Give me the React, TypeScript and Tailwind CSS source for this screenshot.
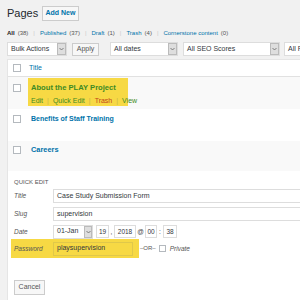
import React from "react";

const Chevron = () => (
  <svg width="5" height="4" viewBox="0 0 5 4" className="block">
    <path d="M0.5 1 L2.5 3 L4.5 1" fill="none" stroke="#666" strokeWidth="0.8" />
  </svg>
);

function Select({ label, w, arrowW = 9 }: { label: string; w: number; arrowW?: number }) {
  return (
    <div
      className="flex h-[14px] items-stretch border border-[#dddddd] bg-white shrink-0"
      style={{ width: w }}
    >
      <div className="flex flex-1 items-center pl-[3px] text-[7px] text-[#32373c] whitespace-nowrap overflow-hidden">
        {label}
      </div>
      <div
        className="flex items-center justify-center border border-[#bbbbbb] bg-[#dedede]"
        style={{ width: arrowW }}
      >
        <Chevron />
      </div>
    </div>
  );
}

const Box = () => (
  <div className="h-[8px] w-[8px] border border-[#b4b9be] bg-white shrink-0" />
);

const Sep = () => <span className="mx-[5px] text-[#c9c9c9]">|</span>;
const ASep = () => <span className="mx-[4px] text-[#c8b54a]">|</span>;

export default function App() {
  return (
    <div className="w-[300px] h-[300px] overflow-hidden bg-[#f1f1f1] text-[#444] font-['Liberation_Sans',Arial,sans-serif]">
      {/* header */}
      <div className="flex items-center h-[15px] mt-[6px] pl-[7px]">
        <div className="text-[11px] text-[#23282d] leading-none w-[35px]">Pages</div>
        <div className="flex h-[15px] w-[37px] items-center justify-center border border-[#cccccc] bg-[#f7f7f7] text-[7px] font-bold text-[#0073aa]">
          Add New
        </div>
      </div>
      {/* subsubsub */}
      <div className="flex items-center h-[9px] mt-[8px] pl-[7px] text-[6px] whitespace-nowrap text-[#555]">
        <span className="font-bold text-[#222]">All</span>
        <span className="ml-[3px]">(38)</span>
        <Sep />
        <span className="text-[#0073aa]">Published</span>
        <span className="ml-[3px]">(37)</span>
        <Sep />
        <span className="text-[#0073aa]">Draft</span>
        <span className="ml-[3px]">(1)</span>
        <Sep />
        <span className="text-[#0073aa]">Trash</span>
        <span className="ml-[3px]">(4)</span>
        <Sep />
        <span className="text-[#0073aa]">Cornerstone content</span>
        <span className="ml-[3px]">(0)</span>
      </div>
      {/* filters */}
      <div className="flex items-center h-[14px] mt-[4px] pl-[7px]">
        <Select label="Bulk Actions" w={60} />
        <div className="ml-[5px] flex h-[13px] w-[27px] items-center justify-center border border-[#cccccc] bg-[#f7f7f7] text-[7px] text-[#555] shrink-0">
          Apply
        </div>
        <div className="ml-[11px]">
          <Select label="All dates" w={68} />
        </div>
        <div className="ml-[5px]">
          <Select label="All SEO Scores" w={97} />
        </div>
        <div className="ml-[4px]">
          <Select label="All Readability" w={60} />
        </div>
      </div>
      {/* table */}
      <div className="mt-[3px] ml-[7px] w-[300px] bg-white border-l border-t border-[#e5e5e5]">
        {/* header row */}
        <div className="flex h-[17px] items-center border-b border-[#e1e1e1]">
          <div className="w-[20px] pl-[5px]"><Box /></div>
          <div className="pl-[1px] text-[7px] text-[#0073aa]">Title</div>
        </div>
        {/* row 1 */}
        <div className="flex h-[32px] items-start bg-[#f9f9f9]">
          <div className="w-[20px] pl-[5px] pt-[7px]"><Box /></div>
          <div className="mt-[1px] h-[28px] w-[100px] bg-[#f7d944] px-[3px] pt-[5px]">
            <div className="text-[7.6px] font-bold leading-[10px] text-[#3e8a24] whitespace-nowrap">
              About the PLAY Project
            </div>
            <div className="mt-[3px] text-[7px] leading-[9px] text-[#3e8a24] whitespace-nowrap">
              Edit<ASep />Quick Edit<ASep />
              <span className="text-[#c2441a]">Trash</span>
              <ASep />View
            </div>
          </div>
        </div>
        {/* row 2 */}
        <div className="flex h-[32px] items-start bg-white">
          <div className="w-[20px] pl-[5px] pt-[6px]"><Box /></div>
          <div className="pl-[3px] pt-[5px] text-[7px] font-bold leading-[10px] text-[#0073aa]">
            Benefits of Staff Training
          </div>
        </div>
        {/* row 3 */}
        <div className="flex h-[30px] items-start bg-[#f9f9f9]">
          <div className="w-[20px] pl-[5px] pt-[5px]"><Box /></div>
          <div className="pl-[3px] pt-[4px] text-[7.4px] font-bold leading-[10px] text-[#0073aa]">
            Careers
          </div>
        </div>
        {/* quick edit */}
        <div className="h-[140px] bg-white pl-[6px]">
          <div className="pt-[7px] text-[6px] leading-[8px] text-[#555] uppercase">Quick Edit</div>
          <div className="mt-[3px] flex h-[14px] items-center">
            <div className="w-[39px] text-[6.5px] italic text-[#555]">Title</div>
            <div className="flex h-[14px] flex-1 items-center border border-[#dddddd] pl-[3px] text-[7px] text-[#32373c]">
              Case Study Submission Form
            </div>
          </div>
          <div className="mt-[4px] flex h-[14px] items-center">
            <div className="w-[39px] text-[6.5px] italic text-[#555]">Slug</div>
            <div className="flex h-[14px] flex-1 items-center border border-[#dddddd] pl-[3px] text-[7px] text-[#32373c]">
              supervision
            </div>
          </div>
          <div className="mt-[4px] flex h-[13px] items-center">
            <div className="w-[39px] text-[6.5px] italic text-[#555]">Date</div>
            <Select label="01-Jan" w={40} arrowW={8} />
            <div className="ml-[3px] flex h-[13px] w-[13px] items-center justify-center border border-[#dddddd] text-[6.5px] text-[#32373c]">19</div>
            <div className="w-[5px] text-center text-[6.5px]">,</div>
            <div className="flex h-[13px] w-[22px] items-center justify-center border border-[#dddddd] text-[6.5px] text-[#32373c]">2018</div>
            <div className="w-[9px] text-center text-[6.5px]">@</div>
            <div className="flex h-[13px] w-[12px] items-center justify-center border border-[#dddddd] text-[6.5px] text-[#32373c]">00</div>
            <div className="w-[6px] text-center text-[6.5px]">:</div>
            <div className="flex h-[13px] w-[14px] items-center justify-center border border-[#dddddd] text-[6.5px] text-[#32373c]">38</div>
          </div>
          <div className="mt-[1px] flex h-[19px] items-center">
            <div className="-ml-[3px] flex h-[19px] w-[128px] items-center bg-[#f7d944] pl-[3px]">
              <div className="w-[39px] text-[6.5px] italic text-[#555]">Password</div>
              <div className="flex h-[14px] w-[80px] items-center border border-[#e0c84a] bg-[#f7d944] pl-[3px] text-[7px] text-[#32373c]">
                playsupervision
              </div>
            </div>
            <div className="ml-[1px] text-[6px] text-[#555]">–OR–</div>
            <div className="ml-[3px]"><div className="h-[7px] w-[7px] border border-[#b4b9be] bg-white" /></div>
            <div className="ml-[4px] text-[6.5px] italic text-[#555]">Private</div>
          </div>
          <div className="mt-[22px] flex h-[15px] w-[31px] items-center justify-center border border-[#cccccc] bg-[#f7f7f7] text-[7px] text-[#555]">
            Cancel
          </div>
        </div>
      </div>
    </div>
  );
}
